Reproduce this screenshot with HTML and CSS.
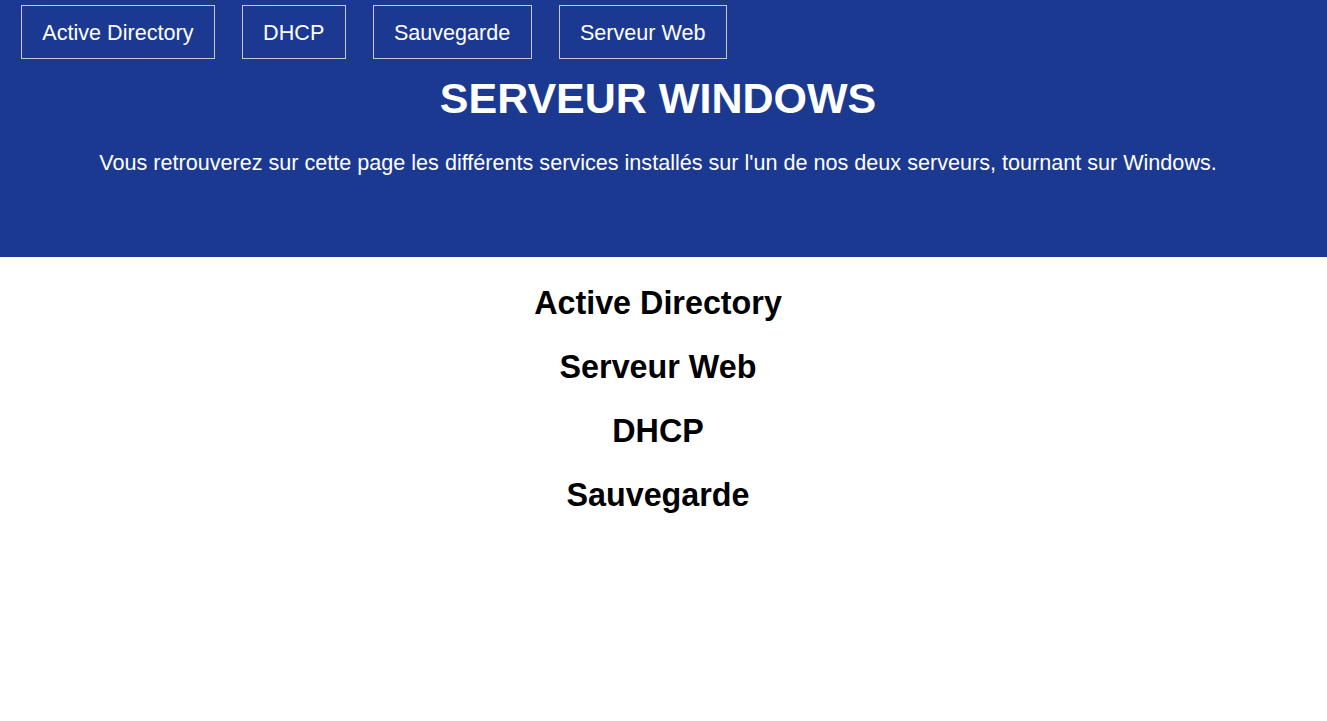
FILE: index.html
```html
<!DOCTYPE html>
<html lang="fr">
<head>
<meta charset="utf-8">
<title>Serveur Windows</title>
<link rel="stylesheet" href="styles.css">
</head>
<body>
<header class="hero">
  <nav class="nav">
    <a class="nav-btn" href="#ad">Active Directory</a>
    <a class="nav-btn" href="#dhcp">DHCP</a>
    <a class="nav-btn" href="#sauvegarde">Sauvegarde</a>
    <a class="nav-btn" href="#web">Serveur Web</a>
  </nav>
  <h1 class="hero-title">SERVEUR WINDOWS</h1>
  <p class="hero-text">Vous retrouverez sur cette page les différents services installés sur l'un de nos deux serveurs, tournant sur Windows.</p>
</header>
<main class="services">
  <h2 class="service" id="ad">Active Directory</h2>
  <h2 class="service" id="web">Serveur Web</h2>
  <h2 class="service" id="dhcp">DHCP</h2>
  <h2 class="service" id="sauvegarde">Sauvegarde</h2>
</main>
</body>
</html>
```

FILE: styles.css
```css
html, body {
  margin: 0;
  padding: 0;
  background: #ffffff;
  font-family: "Liberation Sans", Arial, sans-serif;
}

.hero {
  background: #1b3991;
  color: #ffffff;
  padding: 5px 11px 0 0;
  height: 257px;
  box-sizing: border-box;
}

.nav {
  display: flex;
  gap: 27px;
  padding-left: 21px;
}

.nav-btn {
  color: #ffffff;
  text-decoration: none;
  font-size: 21.6px;
  line-height: 24px;
  padding: 15px 20.3px 13px;
  border: 1px solid #c8c8c8;
}

.hero-title {
  margin: 15px 0 0;
  text-align: center;
  font-size: 43px;
  line-height: 49px;
  font-weight: bold;
}

.hero-text {
  margin: 27px 0 0;
  text-align: center;
  font-size: 21.6px;
  line-height: 25px;
}

.services {
  padding: 28px 11px 0 0;
}

.service {
  margin: 0 0 27px;
  text-align: center;
  font-size: 32.3px;
  line-height: 37px;
  font-weight: bold;
  color: #000000;
}
```
